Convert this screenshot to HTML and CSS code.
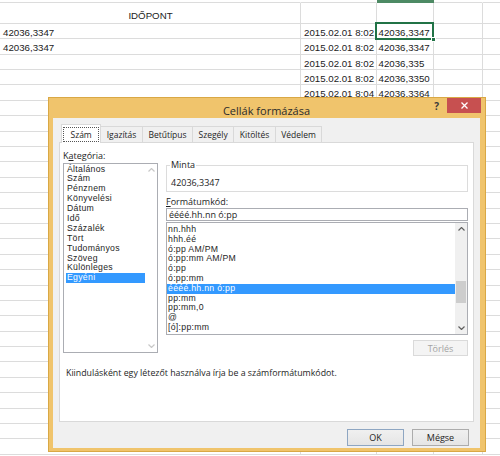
FILE: index.html
```html
<!DOCTYPE html>
<html>
<head>
<meta charset="utf-8">
<title>Cellák formázása</title>
<link rel="stylesheet" href="styles.css">
</head>
<body>
<div class="sheet">
  <div class="row top"><div class="c a"></div><div class="c b"></div><div class="c cc colsel"></div><div class="c d"></div><div class="c e"></div></div>
  <div class="row hdr"><div class="c a ctr">IDŐPONT</div><div class="c b"></div><div class="c cc"></div><div class="c d"></div><div class="c e"></div></div>
  <div class="row"><div class="c a">42036,3347</div><div class="c b">2015.02.01 8:02</div><div class="c cc">42036,3347</div><div class="c d"></div><div class="c e"></div></div>
  <div class="row"><div class="c a">42036,3347</div><div class="c b">2015.02.01 8:02</div><div class="c cc">42036,3347</div><div class="c d"></div><div class="c e"></div></div>
  <div class="row"><div class="c a"></div><div class="c b">2015.02.01 8:02</div><div class="c cc">42036,335</div><div class="c d"></div><div class="c e"></div></div>
  <div class="row"><div class="c a"></div><div class="c b">2015.02.01 8:02</div><div class="c cc">42036,3350</div><div class="c d"></div><div class="c e"></div></div>
  <div class="row"><div class="c a"></div><div class="c b">2015.02.01 8:04</div><div class="c cc">42036,3364</div><div class="c d"></div><div class="c e"></div></div>
  <div class="row"><div class="c a"></div><div class="c b"></div><div class="c cc"></div><div class="c d"></div><div class="c e"></div></div>
  <div class="row"><div class="c a"></div><div class="c b"></div><div class="c cc"></div><div class="c d"></div><div class="c e"></div></div>
  <div class="row"><div class="c a"></div><div class="c b"></div><div class="c cc"></div><div class="c d"></div><div class="c e"></div></div>
  <div class="row"><div class="c a"></div><div class="c b"></div><div class="c cc"></div><div class="c d"></div><div class="c e"></div></div>
  <div class="row"><div class="c a"></div><div class="c b"></div><div class="c cc"></div><div class="c d"></div><div class="c e"></div></div>
  <div class="row"><div class="c a"></div><div class="c b"></div><div class="c cc"></div><div class="c d"></div><div class="c e"></div></div>
  <div class="row"><div class="c a"></div><div class="c b"></div><div class="c cc"></div><div class="c d"></div><div class="c e"></div></div>
  <div class="row"><div class="c a"></div><div class="c b"></div><div class="c cc"></div><div class="c d"></div><div class="c e"></div></div>
  <div class="row"><div class="c a"></div><div class="c b"></div><div class="c cc"></div><div class="c d"></div><div class="c e"></div></div>
  <div class="row"><div class="c a"></div><div class="c b"></div><div class="c cc"></div><div class="c d"></div><div class="c e"></div></div>
  <div class="row"><div class="c a"></div><div class="c b"></div><div class="c cc"></div><div class="c d"></div><div class="c e"></div></div>
  <div class="row"><div class="c a"></div><div class="c b"></div><div class="c cc"></div><div class="c d"></div><div class="c e"></div></div>
  <div class="row"><div class="c a"></div><div class="c b"></div><div class="c cc"></div><div class="c d"></div><div class="c e"></div></div>
  <div class="row"><div class="c a"></div><div class="c b"></div><div class="c cc"></div><div class="c d"></div><div class="c e"></div></div>
  <div class="row"><div class="c a"></div><div class="c b"></div><div class="c cc"></div><div class="c d"></div><div class="c e"></div></div>
  <div class="row"><div class="c a"></div><div class="c b"></div><div class="c cc"></div><div class="c d"></div><div class="c e"></div></div>
  <div class="row"><div class="c a"></div><div class="c b"></div><div class="c cc"></div><div class="c d"></div><div class="c e"></div></div>
  <div class="row"><div class="c a"></div><div class="c b"></div><div class="c cc"></div><div class="c d"></div><div class="c e"></div></div>
  <div class="row"><div class="c a"></div><div class="c b"></div><div class="c cc"></div><div class="c d"></div><div class="c e"></div></div>
  <div class="row"><div class="c a"></div><div class="c b"></div><div class="c cc"></div><div class="c d"></div><div class="c e"></div></div>
  <div class="row"><div class="c a"></div><div class="c b"></div><div class="c cc"></div><div class="c d"></div><div class="c e"></div></div>
  <div class="row"><div class="c a"></div><div class="c b"></div><div class="c cc"></div><div class="c d"></div><div class="c e"></div></div>
  <div class="row"><div class="c a"></div><div class="c b"></div><div class="c cc"></div><div class="c d"></div><div class="c e"></div></div>
</div>
<div class="active-cell"><span class="fill-handle"></span></div>

<div class="dialog">
  <div class="titlebar">
    <div class="title">Cellák formázása</div>
    <div class="tb-btns">
      <span class="help">?</span>
      <span class="close"><svg width="7" height="7" viewBox="0 0 7 7"><path d="M0.5 0.5 L6.5 6.5 M6.5 0.5 L0.5 6.5" stroke="#fff" stroke-width="1.3" fill="none"/></svg></span>
    </div>
  </div>
  <div class="client">
    <div class="tabs">
      <div class="tab active"><span class="focus">Szám</span></div>
      <div class="tab">Igazítás</div>
      <div class="tab">Betűtípus</div>
      <div class="tab">Szegély</div>
      <div class="tab">Kitöltés</div>
      <div class="tab">Védelem</div>
    </div>
    <div class="panel">
      <div class="cols">
        <div class="left">
          <div class="lbl">K<u>a</u>tegória:</div>
          <div class="listbox cat">
            <div class="items">
              <div class="item">Általános</div>
              <div class="item">Szám</div>
              <div class="item">Pénznem</div>
              <div class="item">Könyvelési</div>
              <div class="item">Dátum</div>
              <div class="item">Idő</div>
              <div class="item">Százalék</div>
              <div class="item">Tört</div>
              <div class="item">Tudományos</div>
              <div class="item">Szöveg</div>
              <div class="item">Különleges</div>
              <div class="item sel">Egyéni</div>
            </div>
            <div class="vscroll disabled">
              <div class="sb-btn"><svg width="7" height="4" viewBox="0 0 7 4"><polyline points="0.5,3.5 3.5,0.5 6.5,3.5" fill="none" stroke-width="1.2"/></svg></div>
              <div class="track"></div>
              <div class="sb-btn"><svg width="7" height="4" viewBox="0 0 7 4"><polyline points="0.5,0.5 3.5,3.5 6.5,0.5" fill="none" stroke-width="1.2"/></svg></div>
            </div>
          </div>
        </div>
        <div class="right">
          <fieldset class="sample">
            <legend>Minta</legend>
            <div class="sample-val">42036,3347</div>
          </fieldset>
          <div class="lbl fmtlbl"><u>F</u>ormátumkód:</div>
          <div class="input">éééé.hh.nn ó:pp</div>
          <div class="listbox fmt">
            <div class="items">
              <div class="item">nn.hhh</div>
              <div class="item">hhh.éé</div>
              <div class="item">ó:pp AM/PM</div>
              <div class="item">ó:pp:mm AM/PM</div>
              <div class="item">ó:pp</div>
              <div class="item">ó:pp:mm</div>
              <div class="item sel">éééé.hh.nn ó:pp</div>
              <div class="item">pp:mm</div>
              <div class="item">pp:mm,0</div>
              <div class="item">@</div>
              <div class="item">[ó]:pp:mm</div>
            </div>
            <div class="vscroll">
              <div class="sb-btn"><svg width="7" height="4" viewBox="0 0 7 4"><polyline points="0.5,3.5 3.5,0.5 6.5,3.5" fill="none" stroke-width="1.2"/></svg></div>
              <div class="track"><div class="thumb"></div></div>
              <div class="sb-btn"><svg width="7" height="4" viewBox="0 0 7 4"><polyline points="0.5,0.5 3.5,3.5 6.5,0.5" fill="none" stroke-width="1.2"/></svg></div>
            </div>
          </div>
          <div class="del-row"><button class="btn disabled">Törlés</button></div>
        </div>
      </div>
      <div class="info">Kiindulásként egy létezőt használva írja be a számformátumkódot.</div>
    </div>
    <div class="footer">
      <button class="btn std ok">OK</button>
      <button class="btn std">Mégse</button>
    </div>
  </div>
</div>
</body>
</html>
```
FILE: styles.css
```css
html, body {
  margin: 0;
  padding: 0;
}
body {
  width: 500px;
  height: 456px;
  overflow: hidden;
  position: relative;
  background: #ffffff;
  font-family: "Liberation Sans", Arial, sans-serif;
}

/* ---------- spreadsheet ---------- */
.sheet {
  font-size: 9.7px;
  color: #1b1b1b;
}
.row {
  display: flex;
  height: 15.4px;
}
.row.top {
  height: 3px;
}
.row.hdr {
  height: 20.9px;
}
.c {
  box-sizing: border-box;
  border-right: 1px solid #dcdcdc;
  border-bottom: 1px solid #dcdcdc;
  padding: 2px 2px 0 3px;
  line-height: 13px;
  white-space: nowrap;
  overflow: hidden;
}
.row.top .c {
  padding: 0;
  border-right-color: transparent;
}
.row.top .colsel {
  background: #4d8a64;
  border-bottom-color: #4d8a64;
}
.row.hdr .c {
  padding-top: 5.5px;
}
.ctr {
  text-align: center;
}
.a { width: 301px; }
.b { width: 76px; text-align: right; }
.cc { width: 57px; padding-left: 1.5px; }
.d { width: 49px; }
.e { flex: 1; border-right: none; }

.active-cell {
  position: absolute;
  left: 375px;
  top: 22px;
  width: 59px;
  height: 18px;
  box-sizing: border-box;
  border: 2px solid #217346;
}
.fill-handle {
  position: absolute;
  right: -4px;
  bottom: -4px;
  width: 3px;
  height: 3px;
  background: #217346;
  border: 1px solid #ffffff;
}

/* ---------- dialog ---------- */
.dialog {
  position: absolute;
  left: 48px;
  top: 97px;
  width: 438px;
  height: 355px;
  box-sizing: border-box;
  background: #f0c46c;
  border: 1px solid #d9a845;
  padding: 0 5px 3px 4px;
  display: flex;
  flex-direction: column;
  font-family: "Open Sans", "Noto Sans", sans-serif;
  color: #1e1e1e;
}
.titlebar {
  height: 20px;
  display: grid;
  grid-template-columns: 1fr auto 1fr;
}
.title {
  grid-column: 2;
  font-size: 11px;
  line-height: 15px;
  padding-top: 5px;
  color: #2b2b2b;
  white-space: nowrap;
}
.tb-btns {
  grid-column: 3;
  justify-self: end;
  display: flex;
  align-items: flex-start;
  gap: 8px;
  margin-right: -1px;
}
.help {
  font-size: 10px;
  font-weight: bold;
  line-height: 12px;
  margin-top: 2px;
  color: #3a3a3a;
}
.close {
  width: 34px;
  height: 15px;
  background: #c75050;
  display: flex;
  align-items: center;
  justify-content: center;
}

.client {
  flex: 1;
  background: #f0f0f0;
  padding: 5px 6px 0;
  display: flex;
  flex-direction: column;
}
.tabs {
  display: flex;
  align-items: flex-end;
  height: 19px;
  padding-left: 2px;
  font-size: 8.5px;
}
.tab {
  height: 16px;
  box-sizing: border-box;
  border: 1px solid #d9d9d9;
  border-bottom: none;
  background: #f0f0f0;
  padding: 0 5.5px;
  line-height: 15px;
  margin-left: -1px;
  white-space: nowrap;
}
.tab.active {
  height: 19px;
  background: #ffffff;
  margin-bottom: -1px;
  margin-left: 0;
  padding: 2px 1px 0;
  position: relative;
}
.focus {
  display: block;
  border: 1px dotted #555555;
  padding: 0 6.5px;
  line-height: 13px;
}

.panel {
  height: 280px;
  box-sizing: border-box;
  border: 1px solid #d9d9d9;
  background: #ffffff;
  padding: 6.5px 5px 0 3px;
}
.cols {
  display: grid;
  grid-template-columns: 95px 302px;
  column-gap: 8px;
  align-items: start;
}
.lbl {
  font-size: 9px;
  line-height: 12px;
  white-space: nowrap;
}
.listbox {
  box-sizing: border-box;
  border: 1px solid #abadb3;
  background: #ffffff;
  display: flex;
}
.cat {
  margin-top: 1.5px;
  height: 190px;
}
.items {
  flex: 1;
  font-family: "Liberation Sans", Arial, sans-serif;
  font-size: 8.7px;
  letter-spacing: 0.3px;
  line-height: 9.9px;
  padding: 0.5px 0 0 2px;
  overflow: hidden;
}
.item {
  height: 9.9px;
  padding-left: 1px;
  white-space: nowrap;
}
.item.sel {
  background: #3399ff;
  color: #ffffff;
}
.vscroll {
  width: 12px;
  display: flex;
  flex-direction: column;
  background: #f0f0f0;
}
.vscroll.disabled {
  background: #ffffff;
}
.sb-btn {
  height: 12px;
  display: flex;
  align-items: center;
  justify-content: center;
}
.sb-btn svg {
  stroke: #606060;
}
.vscroll.disabled .sb-btn svg {
  stroke: #c8c8c8;
}
.track {
  flex: 1;
}
.thumb {
  margin: 45.7px 0 0 1px;
  width: 10px;
  height: 22.6px;
  background: #cdcdcd;
}

.right {
  margin-top: 9.5px;
}
.sample {
  margin: 0;
  min-width: 0;
  padding: 5.5px 0 2.5px 3px;
  border: 1px solid #dcdcdc;
  font-size: 9px;
  line-height: 12px;
}
.sample legend {
  padding: 0 1px;
  font-size: 9px;
  line-height: 12px;
}
.sample-val {
  padding-left: 1px;
}
.fmtlbl {
  margin-top: 3.5px;
}
.input {
  margin-top: 0.5px;
  height: 13px;
  box-sizing: border-box;
  border: 1px solid #abadb3;
  padding: 0 2px;
  font-size: 9px;
  line-height: 11px;
  white-space: nowrap;
}
.fmt {
  margin-top: 1px;
  height: 113px;
}
.fmt .items {
  padding: 2px 0 0 0;
  line-height: 9.8px;
}
.fmt .item {
  height: 9.8px;
}
.del-row {
  display: flex;
  justify-content: flex-end;
  margin-top: 5px;
}
.btn {
  font-family: "Open Sans", "Noto Sans", sans-serif;
  font-size: 9px;
  height: 17px;
  box-sizing: border-box;
  border: 1px solid #acacac;
  background: linear-gradient(#f0f0f0, #e5e5e5);
  color: #1e1e1e;
  padding: 0;
  line-height: 15px;
}
.btn.disabled {
  width: 55px;
  height: 16px;
  background: #f4f4f4;
  border-color: #dadada;
  color: #a3a3a3;
}
.btn.std {
  width: 57px;
}
.btn.ok {
  border-color: #8ea6c2;
}
.info {
  margin-top: 10.5px;
  padding-left: 3px;
  font-size: 8.8px;
  line-height: 12px;
  white-space: nowrap;
}
.footer {
  display: flex;
  justify-content: flex-end;
  gap: 8px;
  margin-top: 7px;
  padding-right: 5px;
}
```
